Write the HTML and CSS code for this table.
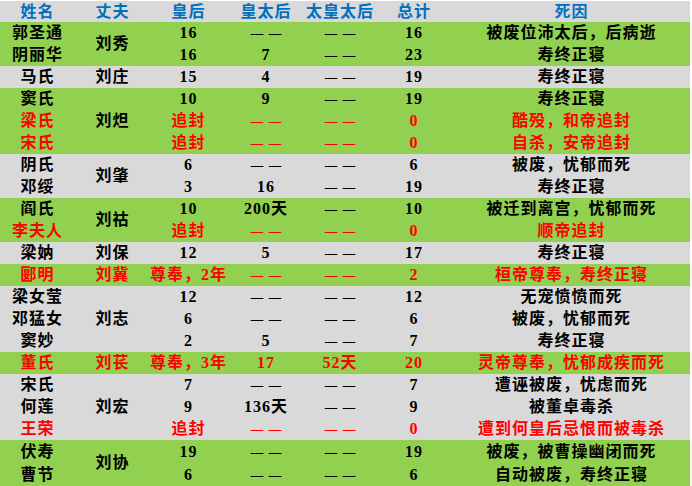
FILE: index.html
```html
<!DOCTYPE html>
<html lang="zh-CN">
<head>
<meta charset="utf-8">
<title>东汉皇后</title>
<link rel="stylesheet" href="styles.css">
</head>
<body>
<table class="queens">
<colgroup>
<col class="c-name"><col class="c-hus"><col class="c-q"><col class="c-qd"><col class="c-gqd"><col class="c-total"><col class="c-cause">
</colgroup>
<thead>
<tr class="head"><th>姓名</th><th>丈夫</th><th>皇后</th><th>皇太后</th><th>太皇太后</th><th>总计</th><th>死因</th></tr>
</thead>
<tbody>
<tr class="g"><td>郭圣通</td><td rowspan="2">刘秀</td><td>16</td><td><span class="dash">——</span></td><td><span class="dash">——</span></td><td>16</td><td>被废位沛太后，后病逝</td></tr>
<tr class="g"><td>阴丽华</td><td>16</td><td>7</td><td><span class="dash">——</span></td><td>23</td><td>寿终正寝</td></tr>
<tr class="s"><td>马氏</td><td>刘庄</td><td>15</td><td>4</td><td><span class="dash">——</span></td><td>19</td><td>寿终正寝</td></tr>
<tr class="g"><td>窦氏</td><td rowspan="3">刘炟</td><td>10</td><td>9</td><td><span class="dash">——</span></td><td>19</td><td>寿终正寝</td></tr>
<tr class="g red"><td>梁氏</td><td>追封</td><td><span class="dash">——</span></td><td><span class="dash">——</span></td><td>0</td><td>酷殁，和帝追封</td></tr>
<tr class="g red"><td>宋氏</td><td>追封</td><td><span class="dash">——</span></td><td><span class="dash">——</span></td><td>0</td><td>自杀，安帝追封</td></tr>
<tr class="s"><td>阴氏</td><td rowspan="2">刘肇</td><td>6</td><td><span class="dash">——</span></td><td><span class="dash">——</span></td><td>6</td><td>被废，忧郁而死</td></tr>
<tr class="s"><td>邓绥</td><td>3</td><td>16</td><td><span class="dash">——</span></td><td>19</td><td>寿终正寝</td></tr>
<tr class="g"><td>阎氏</td><td rowspan="2">刘祜</td><td>10</td><td>200天</td><td><span class="dash">——</span></td><td>10</td><td>被迁到离宫，忧郁而死</td></tr>
<tr class="g red"><td>李夫人</td><td>追封</td><td><span class="dash">——</span></td><td><span class="dash">——</span></td><td>0</td><td>顺帝追封</td></tr>
<tr class="s"><td>梁妠</td><td>刘保</td><td>12</td><td>5</td><td><span class="dash">——</span></td><td>17</td><td>寿终正寝</td></tr>
<tr class="g red"><td>郾明</td><td>刘冀</td><td>尊奉，2年</td><td><span class="dash">——</span></td><td><span class="dash">——</span></td><td>2</td><td>桓帝尊奉，寿终正寝</td></tr>
<tr class="s"><td>梁女莹</td><td rowspan="3">刘志</td><td>12</td><td><span class="dash">——</span></td><td><span class="dash">——</span></td><td>12</td><td>无宠愤愤而死</td></tr>
<tr class="s"><td>邓猛女</td><td>6</td><td><span class="dash">——</span></td><td><span class="dash">——</span></td><td>6</td><td>被废，忧郁而死</td></tr>
<tr class="s"><td>窦妙</td><td>2</td><td>5</td><td><span class="dash">——</span></td><td>7</td><td>寿终正寝</td></tr>
<tr class="g red"><td>董氏</td><td>刘苌</td><td>尊奉，3年</td><td>17</td><td>52天</td><td>20</td><td>灵帝尊奉，忧郁成疾而死</td></tr>
<tr class="s"><td>宋氏</td><td rowspan="3">刘宏</td><td>7</td><td><span class="dash">——</span></td><td><span class="dash">——</span></td><td>7</td><td>遭诬被废，忧虑而死</td></tr>
<tr class="s"><td>何莲</td><td>9</td><td>136天</td><td><span class="dash">——</span></td><td>9</td><td>被董卓毒杀</td></tr>
<tr class="s red"><td>王荣</td><td>追封</td><td><span class="dash">——</span></td><td><span class="dash">——</span></td><td>0</td><td>遭到何皇后忌恨而被毒杀</td></tr>
<tr class="g last"><td>伏寿</td><td rowspan="2">刘协</td><td>19</td><td><span class="dash">——</span></td><td><span class="dash">——</span></td><td>19</td><td>被废，被曹操幽闭而死</td></tr>
<tr class="g last"><td>曹节</td><td>6</td><td><span class="dash">——</span></td><td><span class="dash">——</span></td><td>6</td><td>自动被废，寿终正寝</td></tr>
</tbody>
</table>
</body>
</html>
```

FILE: styles.css
```css
html, body {
  margin: 0;
  padding: 0;
  background: #ffffff;
}
body {
  padding-top: 1px;
}
.queens {
  width: 690px;
  table-layout: fixed;
  border-collapse: collapse;
  border-spacing: 0;
  font-family: "Liberation Serif", "Noto Sans CJK SC", serif;
  font-size: 16px;
  font-weight: bold;
  letter-spacing: 1px;
  color: #000000;
}
.c-name { width: 75px; }
.c-hus { width: 75px; }
.c-q { width: 77px; }
.c-qd { width: 78px; }
.c-gqd { width: 70px; }
.c-total { width: 78px; }
.c-cause { width: 237px; }
.queens th,
.queens td {
  padding: 0;
  height: 22px;
  line-height: 22px;
  text-align: center;
  white-space: nowrap;
  overflow: hidden;
  vertical-align: middle;
}
.head th {
  height: 21px;
  line-height: 21px;
  background: #d9d9d9;
  color: #0070c0;
  font-weight: bold;
}
.g td { background: #92d050; }
.s td { background: #d9d9d9; }
.red td { color: #ff0000; }
.red td[rowspan] { color: #000000; }
.last td { height: 23px; }
.dash {
  font-family: "DejaVu Sans", sans-serif;
  font-size: 14px;
  font-weight: normal;
  letter-spacing: 4px;
  margin-right: -4px;
}
```
